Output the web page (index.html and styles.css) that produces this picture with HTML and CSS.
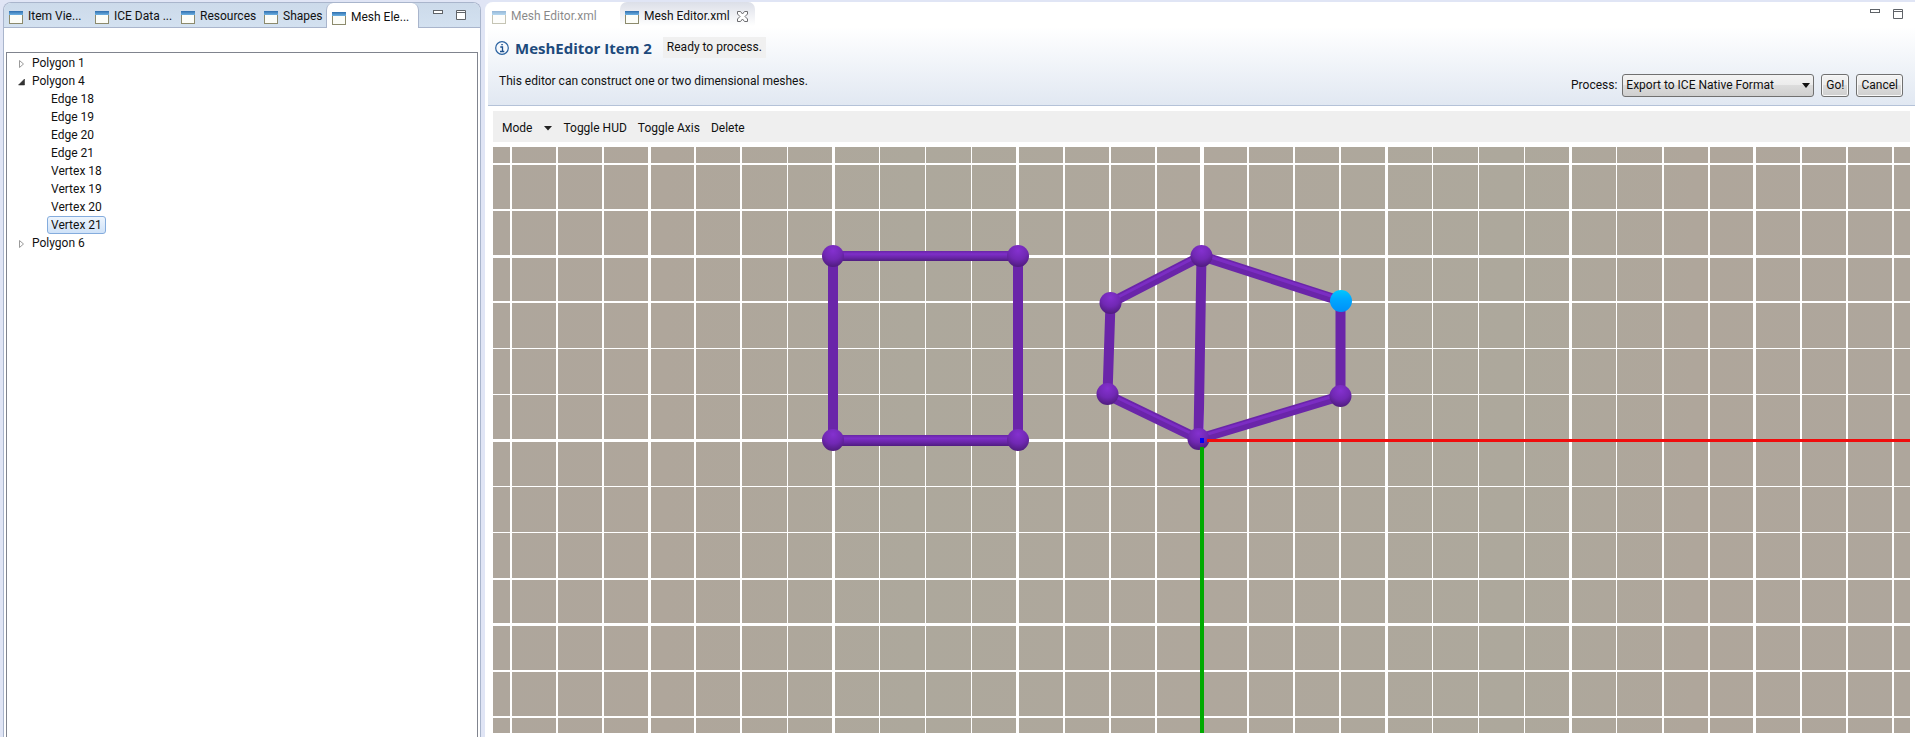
FILE: index.html
```html
<!DOCTYPE html>
<html lang="en">
<head>
<meta charset="utf-8">
<title>Mesh Editor</title>
<link rel="stylesheet" href="styles.css">
</head>
<body>
<svg class="defs" width="0" height="0" aria-hidden="true">
  <defs>
    <linearGradient id="bar" x1="0" y1="0" x2="0" y2="1"><stop offset="0" stop-color="#2f6fae"/><stop offset="1" stop-color="#6db1e2"/></linearGradient>
    <symbol id="view" viewBox="0 0 14 13">
      <rect x="0.5" y="0.5" width="13" height="12" fill="#fcfdf8" stroke="#8c8a6c"/>
      <rect x="0" y="0" width="14" height="4" fill="url(#bar)"/>
    </symbol>
    <symbol id="min" viewBox="0 0 10 11"><rect x="0.5" y="0.5" width="9" height="3" fill="#fff" stroke="#5f6368"/></symbol>
    <symbol id="max" viewBox="0 0 10 11"><path d="M.5.5h9v9h-9zM.5 2.5h9" fill="#fff" stroke="#5f6368"/></symbol>
  </defs>
</svg>
<div class="workbench">
  <section class="panel views">
    <div class="tabbar">
      <button class="tab"><svg class="ico"><use href="#view"/></svg>Item Vie...</button>
      <button class="tab"><svg class="ico"><use href="#view"/></svg>ICE Data ...</button>
      <button class="tab tab-mid"><svg class="ico"><use href="#view"/></svg>Resources</button>
      <button class="tab tab-short"><svg class="ico"><use href="#view"/></svg>Shapes</button>
      <button class="tab tab-active"><svg class="ico"><use href="#view"/></svg>Mesh Ele...</button>
      <div class="winbtns">
        <button class="winbtn" aria-label="Minimize"><svg><use href="#min"/></svg></button>
        <button class="winbtn" aria-label="Maximize"><svg><use href="#max"/></svg></button>
      </div>
    </div>
    <ul class="tree">
      <li class="node"><svg class="arrow" viewBox="0 0 7 10"><path d="M1.500 1.500v7l4-3.500z" fill="#fff" stroke="#9a9a9a"/></svg><span>Polygon 1</span></li>
      <li class="node"><svg class="arrow" viewBox="0 0 7 10"><path d="M6.500 2v6h-6z" fill="#333" stroke="#222" stroke-width=".5"/></svg><span>Polygon 4</span></li>
      <li class="node leaf"><span>Edge 18</span></li>
      <li class="node leaf"><span>Edge 19</span></li>
      <li class="node leaf"><span>Edge 20</span></li>
      <li class="node leaf"><span>Edge 21</span></li>
      <li class="node leaf"><span>Vertex 18</span></li>
      <li class="node leaf"><span>Vertex 19</span></li>
      <li class="node leaf"><span>Vertex 20</span></li>
      <li class="node leaf"><span class="selected">Vertex 21</span></li>
      <li class="node"><svg class="arrow" viewBox="0 0 7 10"><path d="M1.500 1.500v7l4-3.500z" fill="#fff" stroke="#9a9a9a"/></svg><span>Polygon 6</span></li>
    </ul>
  </section>

  <main class="panel editor">
    <div class="tabbar etabs">
      <button class="etab dim"><svg class="ico"><use href="#view"/></svg>Mesh Editor.xml</button>
      <button class="etab current"><svg class="ico"><use href="#view"/></svg>Mesh Editor.xml
        <svg class="close" viewBox="0 0 11 11"><path d="M.5.5h3l2 2.500 2-2.500h3v2.500l-2.500 2.500 2.500 2.500v2.500h-3l-2-2.500-2 2.500h-3v-2.500l2.500-2.500-2.500-2.500z" fill="#fff" stroke="#6c6c70"/></svg>
      </button>
      <div class="winbtns">
        <button class="winbtn" aria-label="Minimize"><svg><use href="#min"/></svg></button>
        <button class="winbtn" aria-label="Maximize"><svg><use href="#max"/></svg></button>
      </div>
    </div>
    <header class="head">
      <div class="titlerow">
        <svg class="info" viewBox="0 0 14 14"><circle cx="7" cy="7" r="6.300" fill="#f6f9fd" stroke="#2a62a0" stroke-width="1.200"/><path d="M5.300 6h2.200v4.300M5 10.500h4.300M6.300 3.600h1.500" fill="none" stroke="#1c4f8c" stroke-width="1.300"/></svg>
        <h1>MeshEditor Item 2</h1>
        <span class="status">Ready to process.</span>
      </div>
      <div class="subrow">
        <p class="desc">This editor can construct one or two dimensional meshes.</p>
        <form class="process">
          <label for="process">Process:</label>
          <span class="selwrap">
            <select id="process"><option>Export to ICE Native Format</option></select>
            <svg class="caret" viewBox="0 0 8 5"><path d="M0 0h8l-4 5z" fill="#111"/></svg>
          </span>
          <button type="button" class="btn go">Go!</button>
          <button type="button" class="btn">Cancel</button>
        </form>
      </div>
    </header>
    <nav class="toolbar">
      <button class="tool mode">Mode<svg viewBox="0 0 8 5"><path d="M0 0h8l-4 4.500z" fill="#222"/></svg></button>
      <button class="tool">Toggle HUD</button>
      <button class="tool">Toggle Axis</button>
      <button class="tool">Delete</button>
    </nav>
    <svg class="canvas" viewBox="493 147 1417 586" preserveAspectRatio="xMidYMid slice" role="img" aria-label="Mesh">
      <defs>
        <linearGradient id="ground" x1="0" y1="0" x2="1" y2="0">
          <stop offset="0" stop-color="#aea69c"/><stop offset=".12" stop-color="#afa69b"/><stop offset=".3" stop-color="#ada89c"/><stop offset=".5" stop-color="#afa79c"/><stop offset=".72" stop-color="#ada89c"/><stop offset=".85" stop-color="#afa69b"/><stop offset="1" stop-color="#aea69c"/>
        </linearGradient>
        <radialGradient id="ball" cx=".5" cy=".25" r=".75"><stop offset="0" stop-color="#8431cf"/><stop offset=".55" stop-color="#7128b4"/><stop offset="1" stop-color="#4f1c7e"/></radialGradient>
        <linearGradient id="picked" x1="0" y1="0" x2="0" y2="1"><stop offset="0" stop-color="#00c8ff"/><stop offset=".4" stop-color="#00a8ff"/><stop offset="1" stop-color="#0090f8"/></linearGradient>
        <linearGradient id="rod" x1="0" y1="0" x2="0" y2="1"><stop offset="0" stop-color="#6825a6"/><stop offset=".3" stop-color="#7e2fc8"/><stop offset=".65" stop-color="#6a26a9"/><stop offset="1" stop-color="#4f1c80"/></linearGradient>
      </defs>
      <rect x="493" y="147" width="1417" height="586" fill="url(#ground)"/>
      <path shape-rendering="crispEdges" fill="#fff" d="M510 147h2v586h-2zM556 147h2v586h-2zM602 147h2v586h-2zM648 147h3v586h-3zM694 147h2v586h-2zM740 147h2v586h-2zM787 147h1v586h-1zM832 147h3v586h-3zM879 147h1v586h-1zM925 147h1v586h-1zM971 147h1v586h-1zM1016 147h3v586h-3zM1063 147h2v586h-2zM1109 147h2v586h-2zM1155 147h2v586h-2zM1200 147h4v586h-4zM1247 147h2v586h-2zM1293 147h2v586h-2zM1339 147h2v586h-2zM1385 147h3v586h-3zM1432 147h1v586h-1zM1478 147h1v586h-1zM1524 147h1v586h-1zM1569 147h3v586h-3zM1616 147h1v586h-1zM1662 147h2v586h-2zM1708 147h2v586h-2zM1753 147h3v586h-3zM1800 147h2v586h-2zM1846 147h2v586h-2zM1892 147h2v586h-2z"/>
      <path shape-rendering="crispEdges" fill="#fff" d="M493 163h1417v2H493zM493 209h1417v2H493zM493 255h1417v3H493zM493 301h1417v2H493zM493 348h1417v1H493zM493 394h1417v1H493zM493 439h1417v3H493zM493 486h1417v1H493zM493 532h1417v1H493zM493 578h1417v2H493zM493 623h1417v3H493zM493 670h1417v2H493zM493 716h1417v2H493z"/>
      <g stroke="#6a25a9" stroke-width="10">
        <path d="M833 256V440M1018 256V440M1201.500 256 1198.500 439M1110.500 303 1107.500 395M1340.500 301V396"/>
        <rect x="833" y="251" width="185" height="10" fill="url(#rod)" stroke="none"/>
        <rect x="833" y="435" width="185" height="11" fill="url(#rod)" stroke="none"/>
        <path d="M1201.500 256 1110.500 303M1201.500 256 1340.500 301M1107.500 395 1198.500 439 1340.500 396" fill="none"/>
        <path d="M1201.500 254 1110.500 301M1201.500 254 1340.500 299M1107.500 393 1198.500 437 1340.500 394" fill="none" stroke="#7b2dc3" stroke-width="3"/>
      </g>
      <g fill="url(#ball)">
        <circle cx="833" cy="256" r="11"/><circle cx="1018" cy="256" r="11"/><circle cx="833" cy="440" r="11"/><circle cx="1018" cy="440" r="11"/>
        <circle cx="1201.500" cy="256" r="11"/><circle cx="1110.500" cy="303" r="11"/><circle cx="1107.500" cy="394" r="11"/><circle cx="1198.500" cy="439" r="11"/><circle cx="1340.500" cy="396" r="11"/>
      </g>
      <circle cx="1341" cy="301" r="11" fill="url(#picked)"/>
      <path shape-rendering="crispEdges" fill="#f00d0d" d="M1207 439h703v3h-703z"/>
      <path shape-rendering="crispEdges" fill="#0a0" d="M1200 447h4v286h-4z"/>
      <path shape-rendering="crispEdges" fill="#0000f5" d="M1200 438h4v5h-4z"/>
    </svg>
  </main>
</div>
</body>
</html>
```
FILE: styles.css
```css
* { box-sizing: border-box; }
html, body { height: 100%; }
body {
  margin: 0;
  background: #e0e5f5;
  color: #111;
  font: 12px/18px Roboto, "Open Sans", sans-serif;
  overflow: hidden;
}
button, select { font: inherit; color: inherit; margin: 0; padding: 0; border: 0; background: none; }
h1, p, ul { margin: 0; padding: 0; }
.defs { position: absolute; }
.workbench {
  display: grid;
  grid-template-columns: 478px minmax(0, 1fr);
  gap: 4px;
  height: 100%;
  padding: 2px 0 0 3px;
}
.panel { display: flex; flex-direction: column; min-height: 0; background: #fff; }
.views { border: 1px solid #a9b5cc; border-bottom: 0; border-radius: 8px 8px 0 0; padding: 0 2px; }
.tabbar { display: flex; flex: none; height: 25px; }
.views .tabbar {
  margin: 0 -2px;
  border-bottom: 1px solid #a9b5cc;
  border-radius: 7px 7px 0 0;
  background: linear-gradient(#ccdaea, #d3e1f0);
}
.tab, .etab { display: flex; align-items: center; gap: 5px; flex: none; white-space: nowrap; padding: 2px 0 0 5px; }
.tab { width: 86px; }
.tab-mid { width: 83px; }
.tab-short { width: 67px; }
.tab-active {
  width: 93px;
  height: 25px;
  background: #fff;
  border: 1px solid #a9b5cc;
  border-width: 0 1px;
  border-radius: 7px 7px 0 0;
}
.ico { width: 14px; height: 13px; flex: none; margin-top: 3px; }
.winbtns { display: flex; align-items: flex-start; gap: 13px; margin-left: auto; padding: 7px 14px 0 0; }
.winbtn, .winbtn svg { display: block; width: 10px; height: 11px; }
.tree {
  flex: 1;
  margin-top: 24px;
  padding: 1px 0 0 11px;
  border: 1px solid #80848e;
  border-bottom: 0;
  list-style: none;
}
.node { display: flex; align-items: center; gap: 3px; height: 18px; }
.node span { padding: 0 3px; border: 1px solid transparent; line-height: 16px; }
.leaf { padding-left: 29px; }
.node .selected { border-color: #84acdd; border-radius: 3px; background: linear-gradient(#eef5fd, #cfe2f8); }
.arrow { width: 7px; height: 10px; flex: none; margin-top: 2px; }

.editor { border-left: 1px solid #fff; border-radius: 8px 0 0 0; }
.etabs { padding-left: 1px; }
.etab { height: 24px; padding-top: 4px; }
.etab .ico { margin-top: 2px; }
.dim { width: 133px; opacity: .5; }
.current {
  width: 135px;
  border-radius: 7px 7px 0 0;
  background: linear-gradient(#dcdfe8, #fff);
}
.close { width: 11px; height: 11px; margin-left: 2px; }
.etabs .winbtns { padding-right: 12px; }
.head {
  margin-left: 2px;
  padding: 10px 12px 9px 7px;
  height: 79px;
  border-bottom: 1px solid #b4c2d8;
  background: linear-gradient(#fff, #e1e8f2);
}
.titlerow { display: flex; align-items: center; height: 21px; }
.info { width: 14px; height: 14px; }
h1 { margin: 0 11px 0 6px; font: bold 15px/20px "Open Sans", sans-serif; color: #1d4a7c; white-space: nowrap; }
.status { padding: 0 4px; line-height: 21px; background: #f0f0f0; }
.subrow { display: flex; align-items: center; justify-content: space-between; padding: 14px 0 0 4px; }
.desc { padding-bottom: 8px; }
.process { display: flex; align-items: center; gap: 7px; }
.process label { margin-right: -2px; }
.selwrap { position: relative; display: flex; }
select, .btn {
  height: 23px;
  border: 1px solid #707070;
  border-radius: 3px;
  background: linear-gradient(#f3f3f3, #ebebeb 50%, #dcdcdc 50%, #cfcfcf);
}
select { appearance: none; width: 192px; padding: 0 24px 0 3px; }
.caret { position: absolute; right: 4px; top: 9px; width: 8px; height: 5px; pointer-events: none; }
.btn { padding: 0 4px; box-shadow: inset 0 0 0 1px #f8f8f8; }
.go { min-width: 28px; }
.toolbar {
  display: flex;
  align-items: center;
  gap: 11px;
  flex: none;
  height: 31px;
  margin: 5px 5px 5px 7px;
  padding: 3px 9px 0;
  background: #efefef;
}
.mode { display: flex; align-items: center; gap: 12px; }
.mode svg { width: 8px; height: 5px; }
.canvas { display: block; flex: 1; min-height: 0; width: auto; margin: 0 5px 4px 7px; }
```
